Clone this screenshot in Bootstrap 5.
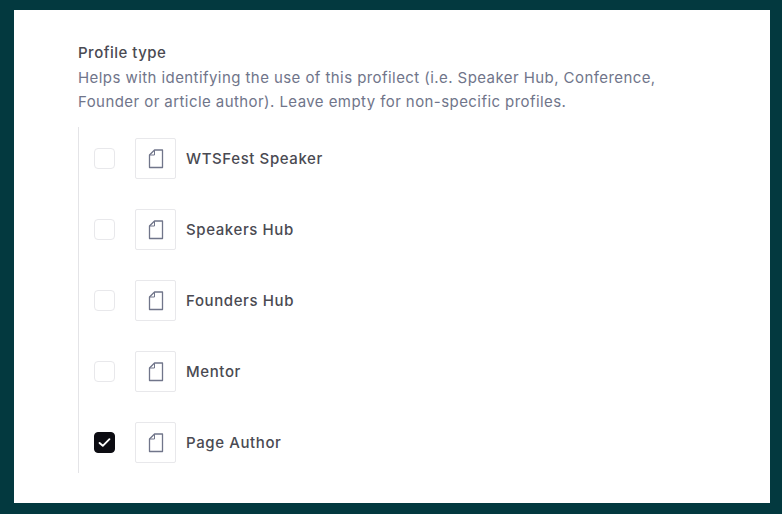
<!DOCTYPE html>
<html lang="en">
<head>
<meta charset="utf-8">
<title>Profile type</title>
<link href="https://cdn.jsdelivr.net/npm/bootstrap@5.3.0/dist/css/bootstrap.min.css" rel="stylesheet">
<style>
html,body{height:100%}
body{background:#03393f;font-family:Inter,"Liberation Sans",sans-serif;padding:10px 12px 11px 14px;overflow:hidden}
.sheet{background:#fff;height:493px;padding:33px 64px 0}
.field-title{font-size:15px;font-weight:500;color:#4a4a52;line-height:20px;margin:0 0 3px;letter-spacing:.5px}
.field-help{font-size:15px;color:#70758a;line-height:24px;margin:0 0 13px;height:48px;width:590px;letter-spacing:.43px}
.opts{border-left:1px solid #e4e4e7;height:346px;padding:11px 0 0 15px;gap:30px}
.opt{height:41px;gap:20px}
.opt .form-check-input{width:21px;height:21px;margin:0;border:1.5px solid #e8e8eb;border-radius:4px;flex:none}
.opt .form-check-input:checked{background-color:#0c0c12;border-color:#0c0c12;background-image:url("data:image/svg+xml,%3csvg xmlns='http://www.w3.org/2000/svg' viewBox='0 0 20 20'%3e%3cpath fill='none' stroke='%23fff' stroke-linecap='round' stroke-linejoin='round' stroke-width='2' d='m4.8 10.5 3.4 3 7-7'/%3e%3c/svg%3e")}
.thumb{width:41px;height:41px;border:1px solid #e8e8eb;border-radius:2px;flex:none}
.opt label{font-size:15px;font-weight:500;color:#4a4a52;margin-left:-10px;padding-top:2px;letter-spacing:.6px}
</style>
</head>
<body>
<div class="sheet">
<p class="field-title">Profile type</p>
<p class="field-help">Helps with identifying the use of this profilect (i.e. Speaker Hub, Conference, Founder or article author). Leave empty for non-specific profiles.</p>
<div class="opts d-flex flex-column">
<div class="opt d-flex align-items-center"><input class="form-check-input" type="checkbox" id="o1"><span class="thumb d-flex align-items-center justify-content-center"><svg width="16" height="20" viewBox="0 0 16 20" fill="none" stroke="#70758a" stroke-width="1.3" stroke-linejoin="round"><path d="M1.5 6 6.5 1H14.5V18.5H1.5Z"/><path d="M6.5 1V6H1.5" stroke-width="1"/></svg></span><label for="o1">WTSFest Speaker</label></div>
<div class="opt d-flex align-items-center"><input class="form-check-input" type="checkbox" id="o2"><span class="thumb d-flex align-items-center justify-content-center"><svg width="16" height="20" viewBox="0 0 16 20" fill="none" stroke="#70758a" stroke-width="1.3" stroke-linejoin="round"><path d="M1.5 6 6.5 1H14.5V18.5H1.5Z"/><path d="M6.5 1V6H1.5" stroke-width="1"/></svg></span><label for="o2">Speakers Hub</label></div>
<div class="opt d-flex align-items-center"><input class="form-check-input" type="checkbox" id="o3"><span class="thumb d-flex align-items-center justify-content-center"><svg width="16" height="20" viewBox="0 0 16 20" fill="none" stroke="#70758a" stroke-width="1.3" stroke-linejoin="round"><path d="M1.5 6 6.5 1H14.5V18.5H1.5Z"/><path d="M6.5 1V6H1.5" stroke-width="1"/></svg></span><label for="o3">Founders Hub</label></div>
<div class="opt d-flex align-items-center"><input class="form-check-input" type="checkbox" id="o4"><span class="thumb d-flex align-items-center justify-content-center"><svg width="16" height="20" viewBox="0 0 16 20" fill="none" stroke="#70758a" stroke-width="1.3" stroke-linejoin="round"><path d="M1.5 6 6.5 1H14.5V18.5H1.5Z"/><path d="M6.5 1V6H1.5" stroke-width="1"/></svg></span><label for="o4">Mentor</label></div>
<div class="opt d-flex align-items-center"><input class="form-check-input" type="checkbox" id="o5" checked><span class="thumb d-flex align-items-center justify-content-center"><svg width="16" height="20" viewBox="0 0 16 20" fill="none" stroke="#70758a" stroke-width="1.3" stroke-linejoin="round"><path d="M1.5 6 6.5 1H14.5V18.5H1.5Z"/><path d="M6.5 1V6H1.5" stroke-width="1"/></svg></span><label for="o5">Page Author</label></div>
</div>
</div>
<script src="https://cdn.jsdelivr.net/npm/bootstrap@5.3.0/dist/js/bootstrap.bundle.min.js"></script>
</body>
</html>
